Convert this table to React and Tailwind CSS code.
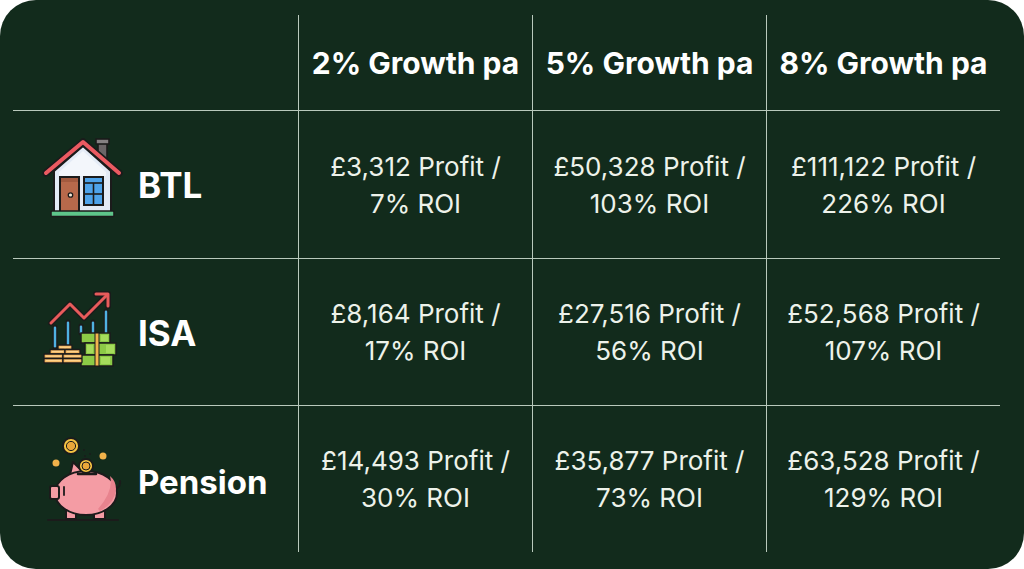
const rows = [
  {
    label: "BTL",
    icon: "house",
    cells: [
      ["£3,312 Profit /", "7% ROI"],
      ["£50,328 Profit /", "103% ROI"],
      ["£111,122 Profit /", "226% ROI"],
    ],
  },
  {
    label: "ISA",
    icon: "isa",
    cells: [
      ["£8,164 Profit /", "17% ROI"],
      ["£27,516 Profit /", "56% ROI"],
      ["£52,568 Profit /", "107% ROI"],
    ],
  },
  {
    label: "Pension",
    icon: "pig",
    cells: [
      ["£14,493 Profit /", "30% ROI"],
      ["£35,877 Profit /", "73% ROI"],
      ["£63,528 Profit /", "129% ROI"],
    ],
  },
]

const INK = "#1b1b1b"

function HouseIcon() {
  return (
    <svg viewBox="0 0 90 95" width="90" height="95" className="-mt-[15px] shrink-0">
      {/* chimney */}
      <rect x="60" y="13" width="9" height="20" fill="#6b6567" stroke={INK} strokeWidth="1.6" />
      <rect x="58" y="9" width="13" height="5" fill="#858082" stroke={INK} strokeWidth="1.6" />
      {/* walls */}
      <path d="M16 41 L45 16 L73 41 V82 H16 Z" fill="#e4ebf6" stroke={INK} strokeWidth="2" />
      <path d="M21 42 L45 21 L68 42 V46 H21 Z" fill="#f3f6fb" />
      {/* roof */}
      <path d="M8 43 L45 12 L81 43" fill="none" stroke={INK} strokeWidth="7.5" strokeLinecap="round" strokeLinejoin="round" />
      <path d="M8 43 L45 12 L81 43" fill="none" stroke="#ec5a61" strokeWidth="4" strokeLinecap="round" strokeLinejoin="round" />
      {/* door */}
      <rect x="22" y="47" width="19" height="35" fill="#b8694b" stroke={INK} strokeWidth="2" />
      <rect x="23" y="48" width="17" height="4" fill="#a45a3f" />
      <circle cx="32.5" cy="65" r="2.2" fill="#f6ead8" stroke={INK} strokeWidth="1.3" />
      {/* window */}
      <rect x="46" y="47" width="19" height="28" fill="#4ea3ea" stroke={INK} strokeWidth="2" />
      <line x1="46" y1="53" x2="65" y2="53" stroke={INK} strokeWidth="1.6" />
      <line x1="55.5" y1="53" x2="55.5" y2="75" stroke={INK} strokeWidth="1.6" />
      <line x1="46" y1="64" x2="65" y2="64" stroke={INK} strokeWidth="1.6" />
      {/* base */}
      <rect x="13" y="81" width="63" height="5.5" rx="1" fill="#5ec58a" stroke={INK} strokeWidth="1.6" />
    </svg>
  )
}

function IsaIcon() {
  const bars = [
    [17, 42, 62],
    [30, 37, 60],
    [43, 41, 48],
    [55, 37, 48],
    [68, 26, 48],
  ]
  const gold = [
    [20, 60, 14],
    [12, 64.5, 15],
    [27, 64.5, 15],
    [6, 69, 19],
    [25, 69, 19],
    [6, 73.5, 19],
    [25, 73.5, 19],
  ]
  return (
    <svg viewBox="0 0 90 85" width="90" height="85" className="-mt-[10px] shrink-0">
      {/* bars */}
      {bars.map(([x, y1, y2]) => (
        <g key={x}>
          <line x1={x} y1={y1} x2={x} y2={y2} stroke={INK} strokeWidth="5" strokeLinecap="round" />
          <line x1={x} y1={y1 + 0.8} x2={x} y2={y2 - 0.8} stroke="#4fb2e3" strokeWidth="2.4" strokeLinecap="round" />
        </g>
      ))}
      {/* arrow */}
      <polyline points="13,38 32,19 46,33 68,11" fill="none" stroke={INK} strokeWidth="6" strokeLinecap="round" strokeLinejoin="round" />
      <polyline points="58,9 70,9 70,21" fill="none" stroke={INK} strokeWidth="6" strokeLinecap="round" strokeLinejoin="round" />
      <polyline points="13,38 32,19 46,33 68,11" fill="none" stroke="#e85b5b" strokeWidth="3" strokeLinecap="round" strokeLinejoin="round" />
      <polyline points="58,9 70,9 70,21" fill="none" stroke="#e85b5b" strokeWidth="3" strokeLinecap="round" strokeLinejoin="round" />
      {/* cash stack */}
      <rect x="43" y="48" width="29" height="10" fill="#8cca46" stroke={INK} strokeWidth="1.5" />
      <rect x="47" y="58" width="31" height="12" fill="#8cca46" stroke={INK} strokeWidth="1.5" />
      <rect x="43" y="70" width="32" height="11" fill="#8cca46" stroke={INK} strokeWidth="1.5" />
      <rect x="63" y="50" width="7" height="6" fill="#a6dc5c" />
      <rect x="49" y="60" width="6" height="8" fill="#a6dc5c" />
      <rect x="68" y="60" width="8" height="8" fill="#a6dc5c" />
      <rect x="63" y="72" width="9" height="7" fill="#a6dc5c" />
      <rect x="57" y="48" width="4" height="33" fill="#f3b64f" stroke={INK} strokeWidth="1" />
      {/* gold stack */}
      {gold.map(([x, y, w], i) => (
        <g key={i}>
          <rect x={x} y={y} width={w} height="4.5" rx="0.8" fill="#f3b561" stroke={INK} strokeWidth="1.3" />
          <line x1={x + 2} y1={y + 2.2} x2={x + w - 2} y2={y + 2.2} stroke="#ffd994" strokeWidth="1" />
        </g>
      ))}
    </svg>
  )
}

function PigIcon() {
  return (
    <svg viewBox="0 0 90 95" width="90" height="95" className="-mt-[2px] shrink-0">
      <line x1="10" y1="89" x2="80" y2="89" stroke={INK} strokeWidth="2" strokeLinecap="round" />
      {/* legs */}
      <rect x="28" y="72" width="10" height="16" rx="1.5" fill="#f49ca4" stroke={INK} strokeWidth="2" />
      <rect x="56" y="72" width="11" height="16" rx="1.5" fill="#f49ca4" stroke={INK} strokeWidth="2" />
      {/* tail */}
      <path d="M78 58 q5 -3 4 -8" fill="none" stroke={INK} strokeWidth="2" strokeLinecap="round" />
      {/* ear */}
      <path d="M31 48 L35 31 L46 42 Z" fill="#f49ca4" stroke={INK} strokeWidth="2" strokeLinejoin="round" />
      {/* body */}
      <ellipse cx="48" cy="62" rx="31" ry="22" fill="#f49ca4" stroke={INK} strokeWidth="2" />
      <path d="M62 80 Q77 72 78 58 Q78 50 72 45 Q76 60 60 78 Z" fill="#e8838e" />
      {/* snout */}
      <rect x="12" y="55" width="9" height="13" rx="2" fill="#f49ca4" stroke={INK} strokeWidth="2" />
      <line x1="26" y1="56" x2="26" y2="64" stroke={INK} strokeWidth="1.8" strokeLinecap="round" />
      {/* slot */}
      <line x1="40" y1="43" x2="58" y2="43" stroke={INK} strokeWidth="2.5" strokeLinecap="round" />
      {/* coins */}
      <circle cx="48" cy="35" r="7" fill="#f5c343" stroke={INK} strokeWidth="1.8" />
      <circle cx="48" cy="35" r="4" fill="#eaa73a" stroke={INK} strokeWidth="1" />
      <circle cx="33" cy="15" r="8" fill="#f5c343" stroke={INK} strokeWidth="1.8" />
      <circle cx="33" cy="15" r="4.6" fill="#eaa73a" stroke={INK} strokeWidth="1" />
      <circle cx="18" cy="32" r="3.5" fill="#f0b24a" />
      <circle cx="65" cy="25" r="3.5" fill="#f0b24a" />
      <circle cx="46" cy="19" r="0.9" fill={INK} />
      <circle cx="52" cy="23" r="0.9" fill={INK} />
      <circle cx="47" cy="25" r="0.9" fill={INK} />
    </svg>
  )
}

const icons = { house: HouseIcon, isa: IsaIcon, pig: PigIcon }

export default function App() {
  const line = "border-[#b9c9bc]"
  return (
    <div className="w-[1024px] h-[569px] bg-white font-['Inter','Liberation_Sans',sans-serif]">
      <div className="w-[1024px] h-[569px] rounded-[36px] bg-[#122b1c] pl-[13px] pt-[15px]">
        <div className="grid grid-cols-[286px_234px_234px_233px] grid-rows-[96px_148px_147px_146px]">
          {/* Header */}
          <div className={`border-r border-b ${line}`} />
          {["2% Growth pa", "5% Growth pa", "8% Growth pa"].map((h, i) => (
            <div
              key={h}
              className={`flex items-center justify-center pt-[2px] border-b ${line} ${i < 2 ? "border-r" : ""} text-[30px] font-bold text-white`}
            >
              {h}
            </div>
          ))}

          {rows.map((row, r) => {
            const Icon = icons[row.icon]
            const last = r === rows.length - 1
            return [
              <div
                key={row.label}
                className={`flex items-center gap-[10px] pl-[25px] border-r ${line} ${last ? "" : "border-b"}`}
              >
                <Icon />
                <span className={`font-bold text-white ${row.label === "Pension" ? "text-[33px] pt-[7px]" : "text-[35px] pt-[2px]"}`}>
                  {row.label}
                </span>
              </div>,
              ...row.cells.map(([a, b], c) => (
                <div
                  key={row.label + c}
                  className={`flex flex-col items-center justify-center text-center text-[26px] leading-[37px] text-[#edf2ea] ${line} ${last ? "" : "border-b"} ${c < 2 ? "border-r" : ""}`}
                >
                  <span>{a}</span>
                  <span>{b}</span>
                </div>
              )),
            ]
          })}
        </div>
      </div>
    </div>
  )
}
